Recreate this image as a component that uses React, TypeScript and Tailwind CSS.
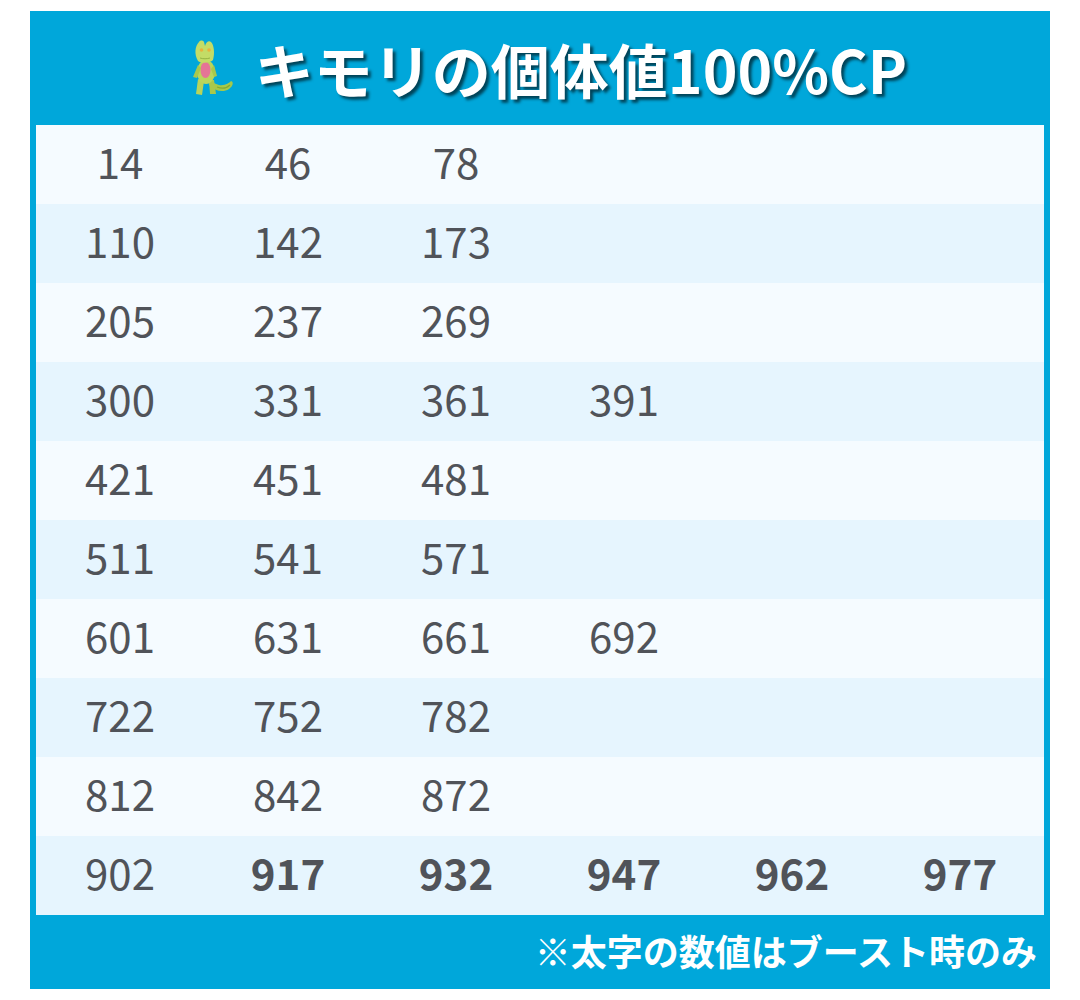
const rows: number[][] = [
  [14, 46, 78],
  [110, 142, 173],
  [205, 237, 269],
  [300, 331, 361, 391],
  [421, 451, 481],
  [511, 541, 571],
  [601, 631, 661, 692],
  [722, 752, 782],
  [812, 842, 872],
  [902, 917, 932, 947, 962, 977],
];

// boosted values (weather boost) are shown in bold
const boosted = new Set([917, 932, 947, 962, 977]);

const Treecko = () => (
  <svg width="46" height="60" viewBox="0 0 46 58" aria-hidden>
    {/* tail */}
    <path d="M20 46 C26 52 34 54 40 50 C44 47 45 43 42 42 C40 44 36 47 30 46 C26 45 23 43 21 42 Z" fill="#a6c94a" />
    <path d="M28 48 C33 50 38 49 41 46" stroke="#86ab33" strokeWidth="1.2" fill="none" />
    {/* legs */}
    <path d="M9 40 L7 55 L13 56 L15 42 Z" fill="#b7d45a" />
    <path d="M20 41 L21 55 L27 55 L25 41 Z" fill="#a9c84c" />
    {/* body */}
    <ellipse cx="17" cy="33" rx="9" ry="12" fill="#b9d65c" />
    <ellipse cx="16.5" cy="31" rx="5" ry="8" fill="#e57596" />
    {/* arms */}
    <path d="M9 26 L4 38 L8 39 L12 29 Z" fill="#a9c84c" />
    <path d="M25 26 L28 37 L25 38 L22 30 Z" fill="#a9c84c" />
    {/* head */}
    <path d="M9 22 C5 15 6 7 10 3 C11 1 14 1 15 3 L16 7 C17 3 20 1 22 3 C25 6 26 14 24 21 C21 24 12 25 9 22 Z" fill="#c3dc66" />
    <circle cx="12.5" cy="11" r="1.8" fill="#e8b23c" />
    <circle cx="20" cy="11" r="1.8" fill="#e8b23c" />
    <path d="M11 19 C14 20 18 20 21 19" stroke="#8aa83a" strokeWidth="0.8" fill="none" />
  </svg>
);

export default function App() {
  return (
    <div
      className="min-h-screen bg-white pt-[11px] pl-[30px]"
      style={{ fontFamily: '"Noto Sans CJK JP", "Noto Sans", sans-serif' }}
    >
      <div className="w-[1020px] bg-[#00a7da] px-[6px]">
        <div className="h-[114px] flex items-center justify-center gap-[20px] pl-[16px]">
          <Treecko />
          <h1 className="text-[59px] font-bold text-white leading-none [text-shadow:3px_3px_3px_rgba(0,0,0,0.6)]">
            キモリの個体値100%CP
          </h1>
        </div>

        <div>
          {rows.map((row, i) => (
            <div
              key={i}
              className={
                i % 2 === 0
                  ? "grid grid-cols-6 h-[79px] pb-[8px] items-center bg-[#f5fbff]"
                  : "grid grid-cols-6 h-[79px] pb-[8px] items-center bg-[#e6f5fe]"
              }
            >
              {row.map((v) => (
                <div
                  key={v}
                  className={
                    boosted.has(v)
                      ? "text-center text-[42px] leading-none font-bold text-[#505359]"
                      : "text-center text-[42px] leading-none text-[#505359]"
                  }
                >
                  {v}
                </div>
              ))}
            </div>
          ))}
        </div>

        <div className="h-[74px] pb-[4px] flex items-center justify-end pr-[7px]">
          <p className="text-[36px] font-bold text-white leading-none">※太字の数値はブースト時のみ</p>
        </div>
      </div>
    </div>
  );
}
